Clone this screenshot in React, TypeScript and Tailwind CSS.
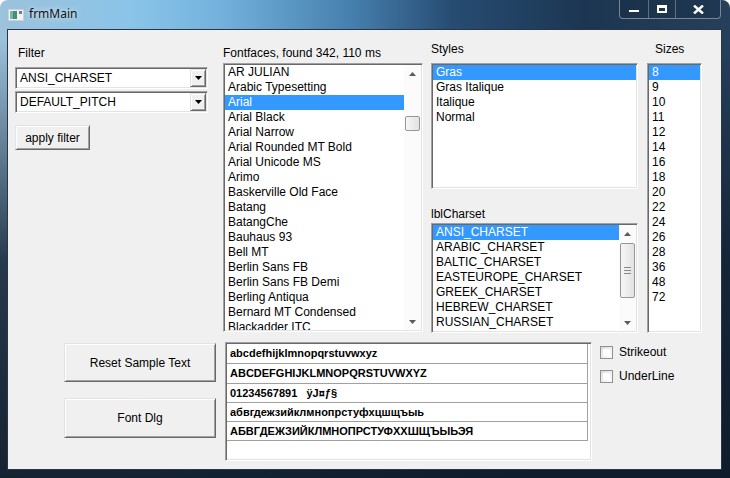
import React from "react";

const fonts = [
  "AR JULIAN",
  "Arabic Typesetting",
  "Arial",
  "Arial Black",
  "Arial Narrow",
  "Arial Rounded MT Bold",
  "Arial Unicode MS",
  "Arimo",
  "Baskerville Old Face",
  "Batang",
  "BatangChe",
  "Bauhaus 93",
  "Bell MT",
  "Berlin Sans FB",
  "Berlin Sans FB Demi",
  "Berling Antiqua",
  "Bernard MT Condensed",
  "Blackadder ITC",
];
const styles = ["Gras", "Gras Italique", "Italique", "Normal"];
const charsets = [
  "ANSI_CHARSET",
  "ARABIC_CHARSET",
  "BALTIC_CHARSET",
  "EASTEUROPE_CHARSET",
  "GREEK_CHARSET",
  "HEBREW_CHARSET",
  "RUSSIAN_CHARSET",
];
const sizes = ["8", "9", "10", "11", "12", "14", "16", "18", "20", "22", "24", "26", "28", "36", "48", "72"];
const samples = [
  "abcdefhijklmnopqrstuvwxyz",
  "ABCDEFGHIJKLMNOPQRSTUVWXYZ",
  "01234567891   ÿJ¤ƒ§",
  "абвгдежзийклмнопрстуфхцшщъыь",
  "АБВГДЕЖЗИЙКЛМНОПРСТУФХХШЩЪЫЬЭЯ",
];

const sunken =
  "bg-white border border-t-[#a0a0a0] border-l-[#a0a0a0] border-r-white border-b-white shadow-[inset_1px_1px_0_#696969,inset_-1px_-1px_0_#e3e3e3] p-px";
const raised =
  "bg-[#f0f0f0] border border-t-[#e3e3e3] border-l-[#e3e3e3] border-r-[#696969] border-b-[#696969] shadow-[inset_1px_1px_0_#ffffff,inset_-1px_-1px_0_#a0a0a0]";

function Item({ text, selected }: { text: string; selected?: boolean }) {
  return (
    <div
      className={`h-[15px] leading-[15px] pl-[3px] pr-[2px] whitespace-nowrap ${
        selected ? "bg-[#3399ff] text-white" : "text-black"
      }`}
    >
      {text}
    </div>
  );
}

function Arrow({ down }: { down?: boolean }) {
  return (
    <div className="h-[17px] flex items-center justify-center">
      <svg width="7" height="4" viewBox="0 0 7 4">
        {down ? <path d="M0 0h7L3.5 4z" fill="#5a5a5a" /> : <path d="M0 4h7L3.5 0z" fill="#5a5a5a" />}
      </svg>
    </div>
  );
}

function ScrollBar({ gap, thumb, grip }: { gap: number; thumb: number; grip?: boolean }) {
  return (
    <div className="w-[17px] h-full flex flex-col bg-[#fbfbfb]">
      <Arrow />
      <div className="flex-1 flex flex-col">
        <div style={{ height: gap }} />
        <div
          style={{ height: thumb }}
          className="mx-[1px] rounded-[2px] border border-[#979797] bg-[linear-gradient(90deg,#f6f6f6,#e2e2e2)] flex flex-col items-center justify-center gap-[2px]"
        >
          {grip && (
            <>
              <div className="w-[7px] h-px bg-[#8a8a8a]" />
              <div className="w-[7px] h-px bg-[#8a8a8a]" />
              <div className="w-[7px] h-px bg-[#8a8a8a]" />
            </>
          )}
        </div>
      </div>
      <Arrow down />
    </div>
  );
}

function Combo({ text }: { text: string }) {
  return (
    <div className={`${sunken} h-[22px] flex items-center`}>
      <div className="flex-1 pl-[3px] leading-[15px]">{text}</div>
      <div className={`${raised} w-[16px] h-full flex items-center justify-center`}>
        <svg width="7" height="4" viewBox="0 0 7 4">
          <path d="M0 0h7L3.5 4z" fill="#000" />
        </svg>
      </div>
    </div>
  );
}

function Check({ label }: { label: string }) {
  return (
    <div className="h-[24px] flex items-center gap-[6px]">
      <div className="w-[13px] h-[13px] border border-[#8e8f8f] bg-[linear-gradient(135deg,#dcdcdc,#ffffff)] p-[2px]">
        <div className="w-full h-full bg-white" />
      </div>
      <span>{label}</span>
    </div>
  );
}

export default function App() {
  return (
    <div className="w-[730px] h-[478px] font-['Liberation_Sans',sans-serif] text-[12px] text-black">
      <div className="w-full h-full rounded-t-[8px] overflow-hidden flex flex-col bg-[linear-gradient(180deg,rgba(0,0,0,0)_8%,rgba(18,32,50,0.85)_55%,rgba(14,26,40,0.95)_100%),linear-gradient(90deg,#9cc2dc_0%,#8ac4e8_18%,#74b2dd_30%,#4680ae_48%,#274c72_62%,#1c3652_80%,#26405c_100%)]">
        {/* title bar */}
        <div className="h-[29px] flex items-start shrink-0">
          <div className="ml-[8px] mt-[9px]">
            <svg width="16" height="12" viewBox="0 0 16 12">
              <rect x="0.5" y="0.5" width="15" height="11" fill="#f2f2f2" stroke="#c8d0d8" />
              <rect x="2" y="2" width="7" height="8" fill="#3f8f7a" />
              <rect x="2" y="2" width="3" height="8" fill="#7fb3a7" />
              <rect x="11" y="2" width="3" height="3" fill="#6e7f8e" />
            </svg>
          </div>
          <div className="ml-[5px] mt-[6px] text-[12px] leading-[16px] text-[#141414] font-['Noto_Sans',sans-serif] [text-shadow:0_0_6px_rgba(255,255,255,0.9)]">
            frmMain
          </div>
          <div className="ml-auto mr-[9px] flex">
            <div className="flex h-[19px] rounded-b-[4px] border border-t-0 border-[rgba(255,255,255,0.4)] bg-[rgba(20,35,55,0.3)] overflow-hidden">
              <div className="w-[29px] flex items-center justify-center border-r border-[rgba(255,255,255,0.3)]">
                <div className="w-[10px] h-[3px] bg-white border-b border-[#203040] mt-[5px]" />
              </div>
              <div className="w-[27px] flex items-center justify-center border-r border-[rgba(255,255,255,0.3)]">
                <div className="w-[10px] h-[8px] border-2 border-white border-t-[3px]" />
              </div>
              <div className="w-[44px] flex items-center justify-center">
                <svg width="11" height="9" viewBox="0 0 11 9">
                  <path d="M1 0.5L10 8.5M10 0.5L1 8.5" stroke="#fff" strokeWidth="2.4" />
                </svg>
              </div>
            </div>
          </div>
        </div>

        {/* client area */}
        <div className="ml-[7px] mr-[8px] h-[441px] border border-[#2a3644] bg-[#f0f0f0] flex flex-col">
          <div className="h-[303px] flex pl-[7px]">
            {/* filter */}
            <div className="w-[193px] pt-[15px] flex flex-col">
              <div className="h-[16px] leading-[16px] pl-[3px]">Filter</div>
              <div className="mt-[6px] flex flex-col gap-[2px]">
                <Combo text="ANSI_CHARSET" />
                <Combo text="DEFAULT_PITCH" />
              </div>
              <div className={`${raised} mt-[12px] w-[75px] h-[25px] flex items-center justify-center`}>
                apply filter
              </div>
            </div>

            {/* font faces */}
            <div className="w-[200px] ml-[15px] pt-[15px] flex flex-col">
              <div className="h-[16px] leading-[16px]">Fontfaces, found 342, 110 ms</div>
              <div className={`${sunken} mt-[2px] h-[269px] flex`}>
                <div className="flex-1 overflow-hidden">
                  {fonts.map((f) => (
                    <Item key={f} text={f} selected={f === "Arial"} />
                  ))}
                </div>
                <ScrollBar gap={34} thumb={15} />
              </div>
            </div>

            {/* styles + charset */}
            <div className="w-[207px] ml-[8px] pt-[11px] flex flex-col">
              <div className="h-[16px] leading-[16px]">Styles</div>
              <div className={`${sunken} mt-[6px] h-[126px]`}>
                {styles.map((s) => (
                  <Item key={s} text={s} selected={s === "Gras"} />
                ))}
              </div>
              <div className="mt-[17px] h-[16px] leading-[16px]">lblCharset</div>
              <div className={`${sunken} mt-[1px] h-[110px] flex`}>
                <div className="flex-1 overflow-hidden">
                  {charsets.map((c) => (
                    <Item key={c} text={c} selected={c === "ANSI_CHARSET"} />
                  ))}
                </div>
                <ScrollBar gap={1} thumb={55} grip />
              </div>
            </div>

            {/* sizes */}
            <div className="w-[55px] ml-[9px] pt-[11px] flex flex-col">
              <div className="h-[16px] leading-[16px] pl-[8px]">Sizes</div>
              <div className={`${sunken} mt-[6px] h-[270px]`}>
                {sizes.map((s) => (
                  <Item key={s} text={s} selected={s === "8"} />
                ))}
              </div>
            </div>
          </div>

          {/* bottom */}
          <div className="mt-[9px] flex pl-[56px]">
            <div className="w-[152px] flex flex-col pt-[1px]">
              <div className={`${raised} h-[39px] flex items-center justify-center`}>Reset Sample Text</div>
              <div className={`${raised} mt-[16px] h-[40px] flex items-center justify-center`}>Font Dlg</div>
            </div>
            <div className={`${sunken} ml-[9px] w-[367px] h-[119px] font-bold text-[11px]`}>
              {samples.map((s, i) => (
                <div
                  key={i}
                  className={`${i < 2 ? "h-[20px]" : "h-[19px]"} mr-[2px] border-b border-r border-[#a0a0a0] flex items-center pl-[3px] whitespace-pre`}
                >
                  {s}
                </div>
              ))}
            </div>
            <div className="ml-[8px] -mt-[2px] flex flex-col">
              <Check label="Strikeout" />
              <Check label="UnderLine" />
            </div>
          </div>
        </div>
      </div>
    </div>
  );
}
